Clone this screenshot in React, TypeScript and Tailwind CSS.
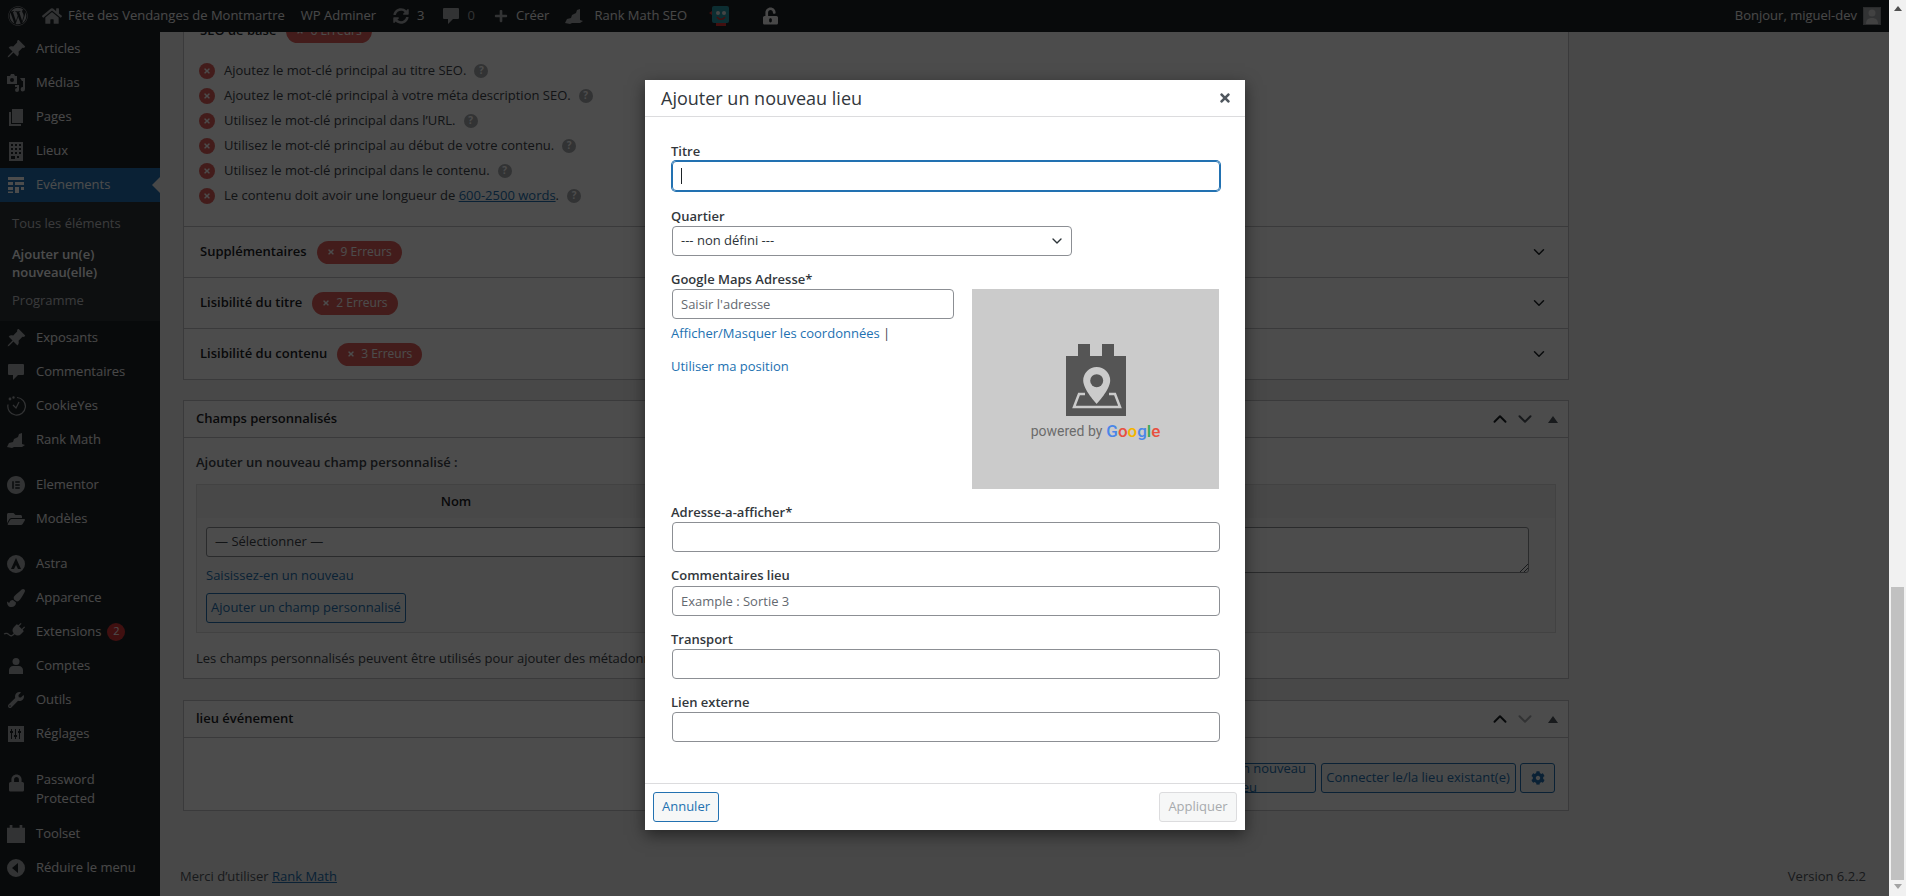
import React from 'react';
import { BsPinAngleFill, BsPlugFill } from 'react-icons/bs';
import { FaCog, FaFolderOpen, FaHome, FaLock, FaPaintBrush, FaPlus, FaSyncAlt, FaTimes, FaUnlockAlt, FaWordpress, FaWrench } from 'react-icons/fa';
import { SiElementor } from 'react-icons/si';
import { ChevronDown, ChevronUp } from 'lucide-react';

const Media = () => (
  <svg viewBox="0 0 20 20" className="w-5 h-5" fill="currentColor">
    <path d="M1 3h3l1-2h3l1 2h2v8H1z" />
    <circle cx="6" cy="7" r="2" fill="#1d2327" />
    <path d="M14 5h5v11a2.2 2.2 0 1 1-2-2V8h-1zM9 12h4v5a2 2 0 1 1-2-2v-1H9z" />
  </svg>
);
const Pages = () => (
  <svg viewBox="0 0 20 20" className="w-5 h-5" fill="currentColor">
    <path d="M6 2h11v14H6zM3 5h2v12h10v2H3z" />
  </svg>
);
const Building = () => (
  <svg viewBox="0 0 20 20" className="w-5 h-5" fill="currentColor">
    <path fillRule="evenodd" d="M3 1h14v19H3zM5 3v2h2V3zm4 0v2h2V3zm4 0v2h2V3zM5 7v2h2V7zm4 0v2h2V7zm4 0v2h2V7zM5 11v2h2v-2zm4 0v2h2v-2zm4 0v2h2v-2zM5 15v3h4v-3zm6 0v2h2v-2z" />
  </svg>
);
const Schedule = () => (
  <svg viewBox="0 0 20 20" className="w-5 h-5" fill="currentColor">
    <path d="M2 2h16v3H2zM2 7h5v3H2zM9 7h9v3H9zM2 12h5v3H2zM9 12h4v6H9zM15 12h3v3h-3zM2 16.500h5V18H2z" />
  </svg>
);
const Comment = () => (
  <svg viewBox="0 0 20 20" className="w-5 h-5" fill="currentColor">
    <path d="M3 2h14a1 1 0 0 1 1 1v9a1 1 0 0 1-1 1h-5l-5 5v-5H3a1 1 0 0 1-1-1V3a1 1 0 0 1 1-1z" />
  </svg>
);
const Cookie = () => (
  <svg viewBox="0 0 20 20" className="w-5 h-5" fill="none" stroke="currentColor" strokeWidth="1.200">
    <path d="M11 1.500a8.800 8.800 0 1 1-9 7" />
    <path d="M7 9l3 3 3-6" />
    <circle cx="4" cy="3" r=".8" fill="currentColor" />
    <circle cx="7.500" cy="1.500" r=".6" fill="currentColor" />
  </svg>
);
const RankMath = () => (
  <svg viewBox="0 0 20 20" className="w-5 h-5" fill="currentColor">
    <path d="M1 17l2-4 4-1 1-3 4-2 1-3 3-1v11l3 1-3 2H8l-2 1z" />
  </svg>
);
const Astra = () => (
  <svg viewBox="0 0 20 20" className="w-5 h-5" fill="currentColor">
    <path fillRule="evenodd" d="M10 1a9 9 0 1 1 0 18 9 9 0 0 1 0-18zm0 3L5 15h3l2-4 2 4h3z" />
  </svg>
);
const User = () => (
  <svg viewBox="0 0 20 20" className="w-5 h-5" fill="currentColor">
    <circle cx="10" cy="5.500" r="3.500" />
    <path d="M3 18v-4c0-2 2-4 4-4h6c2 0 4 2 4 4v4z" />
  </svg>
);
const Sliders = () => (
  <svg viewBox="0 0 20 20" className="w-5 h-5" fill="currentColor">
    <path fillRule="evenodd" d="M2 2h16v16H2zM5 5v2H4v2h1v6h1V9h1V7H6V5zm4 0v6H8v2h1v2h1v-2h1v-2h-1V5zm4 0v2h-1v2h1v6h1V9h1V7h-1V5z" />
  </svg>
);
const Toolset = () => (
  <svg viewBox="0 0 20 20" className="w-[18px] h-5" fill="currentColor">
    <path d="M3 0h3v3h8V0h3v3h3v17H0V3h3z" />
  </svg>
);
const Collapse = () => (
  <svg viewBox="0 0 20 20" className="w-5 h-5" fill="currentColor">
    <path fillRule="evenodd" d="M10 1a9 9 0 1 1 0 18 9 9 0 0 1 0-18zm2 4l-6 5 6 5z" />
  </svg>
);

const menuTop = [
  { label: 'Articles', icon: <BsPinAngleFill className="w-5 h-5" /> },
  { label: 'Médias', icon: <Media /> },
  { label: 'Pages', icon: <Pages /> },
  { label: 'Lieux', icon: <Building /> },
];

const menuBottom = [
  { label: 'Exposants', icon: <BsPinAngleFill className="w-5 h-5" /> },
  { label: 'Commentaires', icon: <Comment /> },
  { label: 'CookieYes', icon: <Cookie /> },
  { label: 'Rank Math', icon: <RankMath />, sep: true },
  { label: 'Elementor', icon: <SiElementor className="w-[18px] h-[18px]" /> },
  { label: 'Modèles', icon: <FaFolderOpen className="w-[18px] h-[18px]" />, sep: true },
  { label: 'Astra', icon: <Astra /> },
  { label: 'Apparence', icon: <FaPaintBrush className="w-[18px] h-[18px]" /> },
  { label: 'Extensions', icon: <BsPlugFill className="w-5 h-5 rotate-45" />, badge: '2' },
  { label: 'Comptes', icon: <User /> },
  { label: 'Outils', icon: <FaWrench className="w-4 h-4" /> },
  { label: 'Réglages', icon: <Sliders />, sep: true },
];

const seoChecks = [
  'Ajoutez le mot-clé principal au titre SEO.',
  'Ajoutez le mot-clé principal à votre méta description SEO.',
  'Utilisez le mot-clé principal dans l’URL.',
  'Utilisez le mot-clé principal au début de votre contenu.',
  'Utilisez le mot-clé principal dans le contenu.',
];

function MenuRow({ label, icon, badge, sep, className }: { label: string; icon: React.ReactNode; badge?: string; sep?: boolean; className?: string }) {
  return (
    <div className={`flex items-center h-[34px] text-[#f0f0f1] ${sep ? 'mb-[11px]' : ''} ${className ?? ''}`}>
      <span className="w-9 flex justify-center pr-1 text-[#a7aaad] shrink-0">{icon}</span>
      <span>{label}</span>
      {badge && (
        <span className="ml-1.5 w-[18px] h-[18px] rounded-full bg-[#d63638] text-white text-[11px] flex items-center justify-center">{badge}</span>
      )}
    </div>
  );
}

function Sidebar() {
  return (
    <aside className="w-40 shrink-0 bg-[#1d2327]">
      {menuTop.map((m) => (
        <MenuRow key={m.label} {...m} />
      ))}
      <div className="relative flex items-center h-[34px] bg-[#2271b1] text-white">
        <span className="w-9 flex justify-center pr-1 shrink-0"><Schedule /></span>
        <span>Evénements</span>
        <span className="absolute right-0 top-[9px] border-y-8 border-r-8 border-y-transparent border-r-[#f0f0f1]" />
      </div>
      <div className="bg-[#2c3338] pt-[7px] pb-[7px] px-3 leading-[18px] text-[#c3c4c7]">
        <div className="py-[5px] mb-[2.500px]">Tous les éléments</div>
        <div className="py-[5px] font-semibold text-white">Ajouter un(e)<br />nouveau(elle)</div>
        <div className="py-[5px]">Programme</div>
      </div>
      {menuBottom.map((m) => (
        <MenuRow key={m.label} {...m} />
      ))}
      <div className="flex pt-2 pb-2 leading-[19.500px] text-[#f0f0f1]">
        <span className="w-9 flex justify-center pr-1 pt-1 text-[#a7aaad] shrink-0"><FaLock className="w-[15px] h-[18px]" /></span>
        <span>Password<br />Protected</span>
      </div>
      <MenuRow label="Toolset" icon={<Toolset />} />
      <MenuRow label="Réduire le menu" icon={<Collapse />} className="text-[#a7aaad]" />
    </aside>
  );
}

function AdminBar() {
  return (
    <header className="h-8 shrink-0 bg-[#1d2327] text-[#f0f0f1] flex items-center">
      <span className="w-[35px] flex justify-center text-[#a7aaad]"><FaWordpress className="w-5 h-5" /></span>
      <span className="ml-[7px] text-[#a7aaad]"><FaHome className="w-5 h-5" /></span>
      <span className="ml-[6px]">Fête des Vendanges de Montmartre</span>
      <span className="ml-[16px]">WP Adminer</span>
      <span className="ml-[17px] text-[#a7aaad]"><FaSyncAlt className="w-4 h-4" /></span>
      <span className="ml-[8px]">3</span>
      <span className="ml-[16px] text-[#a7aaad]"><Comment /></span>
      <span className="ml-[7px] text-[#a7aaad]">0</span>
      <span className="ml-[19px] text-[#a7aaad]"><FaPlus className="w-3.5 h-3.5" /></span>
      <span className="ml-[8px]">Créer</span>
      <span className="ml-[15px] text-[#a7aaad]"><RankMath /></span>
      <span className="ml-[10px]">Rank Math SEO</span>
      <svg viewBox="0 0 22 22" className="ml-[21px] w-[22px] h-[22px]">
        <rect x="4" y="1" width="17" height="17" rx="2" fill="#2b9aa8" />
        <circle cx="10" cy="8" r="2" fill="#e8e8e8" />
        <circle cx="16" cy="8" r="2" fill="#e8e8e8" />
        <path d="M9 12c2 3 6 3 8 0" stroke="#d33" strokeWidth="1.500" fill="none" />
        <path d="M8 18h10v3H8zM1 8l3-2v4z" fill="#d33" />
      </svg>
      <span className="ml-[33px] text-[#f0f0f1]"><FaUnlockAlt className="w-[15px] h-[18px]" /></span>
      <span className="ml-auto">Bonjour, miguel-dev</span>
      <span className="ml-[6px] mr-[8px] w-[18px] h-[18px] bg-[#a7aaad] border border-[#8c8f94] flex items-end justify-center overflow-hidden">
        <svg viewBox="0 0 16 16" className="w-4 h-4" fill="#dcdcde"><circle cx="8" cy="5" r="3.500" /><path d="M2 16c0-4 2-6 6-6s6 2 6 6z" /></svg>
      </span>
    </header>
  );
}

function ErrorBadge({ text }: { text: string }) {
  return (
    <span className="ml-[10px] h-[23px] px-[10px] rounded-full bg-[#e0605c] text-white text-[12px] flex items-center gap-1.5">
      <FaTimes className="w-2 h-2" />
      {text}
    </span>
  );
}

function Help() {
  return (
    <span className="ml-2 w-[14px] h-[14px] rounded-full bg-[#a7aaad] text-white text-[10px] font-bold flex items-center justify-center">?</span>
  );
}

function CheckRow({ children }: { children: React.ReactNode }) {
  return (
    <li className="h-[25px] flex items-center">
      <span className="w-4 h-4 rounded-full bg-[#e0605c] text-white flex items-center justify-center mr-[9px]">
        <FaTimes className="w-2 h-2" />
      </span>
      {children}
      <Help />
    </li>
  );
}

function AccordionRow({ title, errors }: { title: string; errors: string }) {
  return (
    <div className="h-[51px] border-t border-[#c3c4c7] pl-4 pr-5 flex items-center">
      <span className="font-semibold text-[#1d2327]">{title}</span>
      <ErrorBadge text={errors} />
      <ChevronDown className="ml-auto w-[18px] h-[18px] text-[#1d2327]" />
    </div>
  );
}

function BoxHeader({ title, downMuted }: { title: string; downMuted?: boolean }) {
  return (
    <div className="h-[37px] border-b border-[#c3c4c7] pl-3 pr-[10px] flex items-center">
      <span className="font-semibold text-[#1d2327]">{title}</span>
      <span className="ml-auto flex items-center">
        <ChevronUp className="w-[22px] h-[22px] text-[#1d2327]" strokeWidth={2.2} />
        <ChevronDown className={`ml-[3px] w-[22px] h-[22px] ${downMuted ? 'text-[#a7aaad]' : 'text-[#50575e]'}`} strokeWidth={2.2} />
        <span className="ml-[12px] border-x-[5px] border-b-[7px] border-x-transparent border-b-[#50575e]" />
      </span>
    </div>
  );
}

function OutlineButton({ children, className }: { children: React.ReactNode; className?: string }) {
  return (
    <button className={`h-[30px] rounded-[3px] border border-[#2271b1] bg-[#f6f7f7] text-[#2271b1] flex items-center justify-center ${className ?? ''}`}>
      {children}
    </button>
  );
}

function Page() {
  return (
    <main className="flex-1 min-w-0 overflow-hidden">
      <div className="-mt-[20px] pl-[23px] w-[1409px]">
        <section className="w-[1386px] bg-white border border-[#c3c4c7] text-[#3c434a]">
          <div className="h-[36px] pl-4 flex items-center">
            <span className="font-semibold text-[#1d2327]">SEO de base</span>
            <ErrorBadge text="6 Erreurs" />
          </div>
          <ul className="pl-[15px] pt-[9px] pb-[18px]">
            {seoChecks.map((c) => (
              <CheckRow key={c}>{c}</CheckRow>
            ))}
            <CheckRow>
              Le contenu doit avoir une longueur de&nbsp;<a className="text-[#2271b1] underline">600-2500 words</a>.
            </CheckRow>
          </ul>
          <AccordionRow title="Supplémentaires" errors="9 Erreurs" />
          <AccordionRow title="Lisibilité du titre" errors="2 Erreurs" />
          <AccordionRow title="Lisibilité du contenu" errors="3 Erreurs" />
        </section>

        <section className="mt-[20px] w-[1386px] h-[279px] bg-white border border-[#c3c4c7] text-[#3c434a]">
          <BoxHeader title="Champs personnalisés" />
          <div className="px-3">
            <p className="mt-[14px] h-[20px] leading-[20px] font-semibold">Ajouter un nouveau champ personnalisé :</p>
            <div className="mt-[12px] border border-[#dcdcde] bg-[#f9f9f9] h-[149px]">
              <div className="h-[33px] bg-[#f0f0f1] grid grid-cols-[518px_1fr] items-center font-semibold text-[#1d2327]">
                <span className="text-center">Nom</span>
                <span className="text-center">Valeur</span>
              </div>
              <div className="flex pt-[9px] pl-[9px]">
                <div className="w-[500px]">
                  <div className="h-[30px] rounded-[3px] border border-[#8c8f94] bg-white px-2 flex items-center">— Sélectionner —</div>
                  <a className="block mt-[9px] text-[#2271b1] leading-[18px]">Saisissez-en un nouveau</a>
                  <OutlineButton className="mt-[9px] w-[200px]">Ajouter un champ personnalisé</OutlineButton>
                </div>
                <div className="relative ml-[20px] w-[803px] h-[46px] rounded-[3px] border border-[#8c8f94] bg-white">
                  <svg viewBox="0 0 10 10" className="absolute right-0 bottom-0 w-2.5 h-2.5" stroke="#50575e" strokeWidth="1"><path d="M2 10L10 2M6 10l4-4" /></svg>
                </div>
              </div>
            </div>
            <p className="mt-[15px] leading-[20px]">Les champs personnalisés peuvent être utilisés pour ajouter des métadonnées supplémentaires à une publication que vous pouvez utiliser dans votre thème.</p>
          </div>
        </section>

        <section className="mt-[21px] w-[1386px] h-[111px] bg-white border border-[#c3c4c7] text-[#3c434a]">
          <BoxHeader title="lieu événement" downMuted />
          <div className="pt-[25px] pr-[13px] flex justify-end gap-[4.500px]">
            <OutlineButton className="w-[140px]">Ajouter un nouveau lieu</OutlineButton>
            <OutlineButton className="w-[195px]">Connecter le/la lieu existant(e)</OutlineButton>
            <OutlineButton className="w-[35px]"><FaCog className="w-3.5 h-3.5" /></OutlineButton>
          </div>
        </section>

        <footer className="mt-[56px] w-[1686px] -ml-[3px] h-5 flex items-center justify-between text-[#50575e]">
          <span>Merci d’utiliser <a className="text-[#2271b1] underline">Rank Math</a></span>
          <span>Version 6.2.2</span>
        </footer>
      </div>
    </main>
  );
}

function Field({ label, className, children }: { label: string; className?: string; children: React.ReactNode }) {
  return (
    <div className={className}>
      <label className="block h-[19px] leading-[19px] font-semibold text-[#32373c]">{label}</label>
      {children}
    </div>
  );
}

const inputCls = 'block ml-px w-[548px] h-[30px] px-2 rounded-[4px] border border-[#8c8f94] bg-white outline-none placeholder:text-[#646970]';

function MapPlaceholder() {
  return (
    <div className="w-[247px] h-[200px] bg-[#cbcbcb] flex flex-col items-center pt-[55px]">
      <svg viewBox="0 0 60 72" className="w-[60px] h-[72px]">
        <path d="M12 0h12v12h12V0h12v12h12v60H0V12h12z" fill="#555" />
        <path d="M19 50h-6L8 63h46l-5-13h-6" fill="none" stroke="#cbcbcb" strokeWidth="2.500" />
        <path d="M30.700 23a13.500 13.500 0 0 0-13.500 13.500c0 9 13.500 23.500 13.500 23.500s13.500-14.500 13.500-23.500A13.500 13.500 0 0 0 30.700 23z" fill="#cbcbcb" />
        <circle cx="30.700" cy="36.700" r="6.500" fill="#555" />
      </svg>
      <div className="mt-[5px] flex items-center gap-[4px] font-['Roboto',sans-serif] text-[14px] leading-[20px] text-[#6b6b6b]">
        powered by
        <span className="text-[17px] font-medium">
          <span className="text-[#4a86e8]">G</span>
          <span className="text-[#e8503f]">o</span>
          <span className="text-[#f4b400]">o</span>
          <span className="text-[#4a86e8]">g</span>
          <span className="text-[#34a853]">l</span>
          <span className="text-[#e8503f]">e</span>
        </span>
      </div>
    </div>
  );
}

function Modal() {
  return (
    <div className="w-[600px] h-[750px] bg-white flex flex-col text-[#3c434a] shadow-[0_5px_15px_rgba(0,0,0,0.5)]">
      <div className="h-[37px] shrink-0 border-b border-[#dcdcde] pl-4 pr-[13px] flex items-center justify-between">
        <h2 className="text-[18px] text-[#32373c]">Ajouter un nouveau lieu</h2>
        <FaTimes className="w-3.5 h-3.5 text-[#50575e]" />
      </div>
      <div className="flex-1 pl-[26px] pt-[25px]">
        <Field label="Titre">
          <div className="relative ml-px w-[548px] h-[30px] rounded-[4px] border border-[#2271b1] ring-1 ring-[#2271b1]">
            <span className="absolute left-[8px] top-[6px] w-px h-4 bg-[#1d2327]" />
          </div>
        </Field>
        <Field label="Quartier" className="mt-[16px]">
          <div className="relative ml-px w-[400px] h-[30px] rounded-[4px] border border-[#8c8f94] px-2 flex items-center text-[#2c3338]">
            --- non défini ---
            <ChevronDown className="absolute right-[6px] top-[6px] w-4 h-4 text-[#2c3338]" />
          </div>
        </Field>
        <Field label="Google Maps Adresse*" className="mt-[14px]">
          <div className="flex items-start">
            <div className="w-[301px]">
              <input readOnly placeholder="Saisir l'adresse" className={`${inputCls} !w-[282px]`} />
              <p className="mt-[4px] leading-[20px] text-[#2271b1]">Afficher/Masquer les coordonnées <span className="text-[#3c434a]">|</span></p>
              <p className="mt-[13px] leading-[20px] text-[#2271b1]">Utiliser ma position</p>
            </div>
            <MapPlaceholder />
          </div>
        </Field>
        <Field label="Adresse-a-afficher*" className="mt-[14px]">
          <input readOnly className={inputCls} />
        </Field>
        <Field label="Commentaires lieu" className="mt-[14px]">
          <input readOnly placeholder="Example : Sortie 3" className={`${inputCls} mt-px`} />
        </Field>
        <Field label="Transport" className="mt-[14px]">
          <input readOnly className={inputCls} />
        </Field>
        <Field label="Lien externe" className="mt-[14px]">
          <input readOnly className={inputCls} />
        </Field>
      </div>
      <div className="h-[47px] shrink-0 border-t border-[#dcdcde] pt-2 px-2 flex justify-between">
        <OutlineButton className="w-[66px]">Annuler</OutlineButton>
        <button className="w-[78px] h-[30px] rounded-[3px] border border-[#dcdcde] bg-[#f6f7f7] text-[#a7aaad]">Appliquer</button>
      </div>
    </div>
  );
}

function Scrollbar() {
  return (
    <div className="w-[17px] h-full shrink-0 bg-[#f1f1f1] flex flex-col items-center">
      <span className="mt-[6px] border-x-[4px] border-b-[5px] border-x-transparent border-b-[#505050]" />
      <div className="mt-[576px] w-[13px] h-[293px] bg-[#c1c1c1]" />
      <span className="mt-[4px] border-x-[4px] border-t-[5px] border-x-transparent border-t-[#a3a3a3]" />
    </div>
  );
}

export default function App() {
  return (
    <div className="h-[896px] w-[1906px] flex overflow-hidden font-['Open_Sans',sans-serif] text-[13px] bg-[#f0f0f1]">
      <div className="relative flex-1 min-w-0 flex flex-col">
        <AdminBar />
        <div className="flex-1 min-h-0 flex">
          <Sidebar />
          <Page />
        </div>
        <div className="absolute inset-0 bg-black/70 pl-[645px] pt-20">
          <Modal />
        </div>
      </div>
      <Scrollbar />
    </div>
  );
}
